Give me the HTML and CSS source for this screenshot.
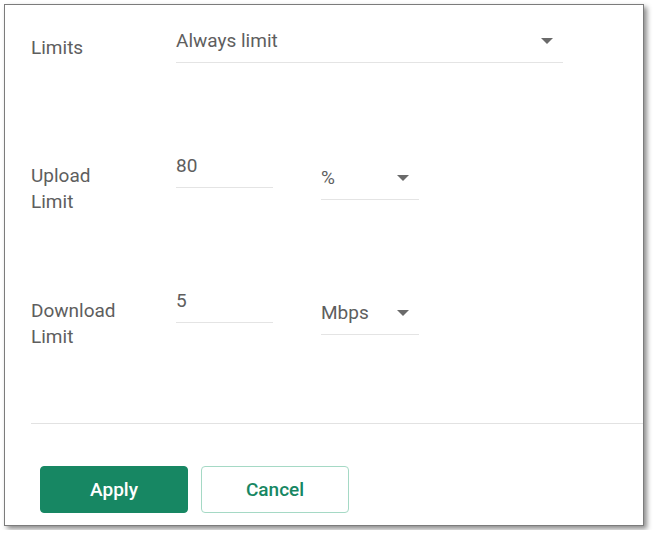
FILE: index.html
```html
<!DOCTYPE html>
<html lang="en">
  <head>
    <meta charset="UTF-8" />
    <meta name="viewport" content="width=device-width, initial-scale=1.0" />
    <title>Bandwidth limits</title>
    <link rel="stylesheet" href="styles.css">
  </head>
  <body>
    <div class="dialog">
      <div class="row row-first">
        <div class="label label-single">Limits</div>
        <div class="select select-wide">
          <span>Always limit</span>
          <span class="arrow"></span>
        </div>
      </div>

      <div class="row">
        <div class="label">Upload<br />Limit</div>
        <div class="input">80</div>
        <div class="select select-unit">
          <span>%</span>
          <span class="arrow"></span>
        </div>
      </div>

      <div class="row">
        <div class="label">Download<br />Limit</div>
        <div class="input">5</div>
        <div class="select select-unit">
          <span>Mbps</span>
          <span class="arrow"></span>
        </div>
      </div>

      <hr class="divider" />

      <div class="actions">
        <button class="btn btn-primary">Apply</button>
        <button class="btn btn-outline">Cancel</button>
      </div>
    </div>
  </body>
</html>
```

FILE: styles.css
```css
body {
  margin: 0;
  padding: 0;
  background: #ffffff;
  font-family: Roboto, "Liberation Sans", sans-serif;
  color: #5e5e5e;
}

.dialog {
  margin: 4px;
  width: 640px;
  height: 522px;
  box-sizing: border-box;
  border: 1px solid #7c7c7c;
  box-shadow: 3px 3px 5px rgba(0, 0, 0, 0.45);
  padding: 23px 0 0 26px;
  display: flex;
  flex-direction: column;
}

.row {
  display: flex;
  align-items: flex-start;
  height: 135px;
  font-size: 19px;
  line-height: 26px;
}

.row-first {
  height: 125px;
}

.label {
  width: 145px;
  margin-top: 10px;
}

.label-single {
  margin-top: 7px;
}

.input {
  width: 97px;
  padding-bottom: 8px;
  border-bottom: 1px solid #e4e4e4;
}

.select {
  display: flex;
  justify-content: space-between;
  align-items: center;
  padding-bottom: 8px;
  border-bottom: 1px solid #e4e4e4;
}

.select-wide {
  width: 387px;
}

.select-unit {
  width: 98px;
  margin-left: 48px;
  margin-top: 12px;
}

.arrow {
  width: 0;
  height: 0;
  margin-right: 10px;
  border-left: 6px solid transparent;
  border-right: 6px solid transparent;
  border-top: 6px solid #6a6a6a;
}

.divider {
  margin: 0;
  border: none;
  border-top: 1px solid #e2e2e2;
}

.actions {
  display: flex;
  gap: 13px;
  margin-top: 42px;
  margin-left: 9px;
}

.btn {
  width: 148px;
  height: 47px;
  border-radius: 4px;
  font-family: Roboto, "Liberation Sans", sans-serif;
  font-size: 19px;
  font-weight: 500;
  cursor: pointer;
}

.btn-primary {
  background: #178763;
  border: 1px solid #178763;
  color: #ffffff;
}

.btn-outline {
  background: #ffffff;
  border: 1px solid #a5d9c5;
  color: #178763;
}
```
